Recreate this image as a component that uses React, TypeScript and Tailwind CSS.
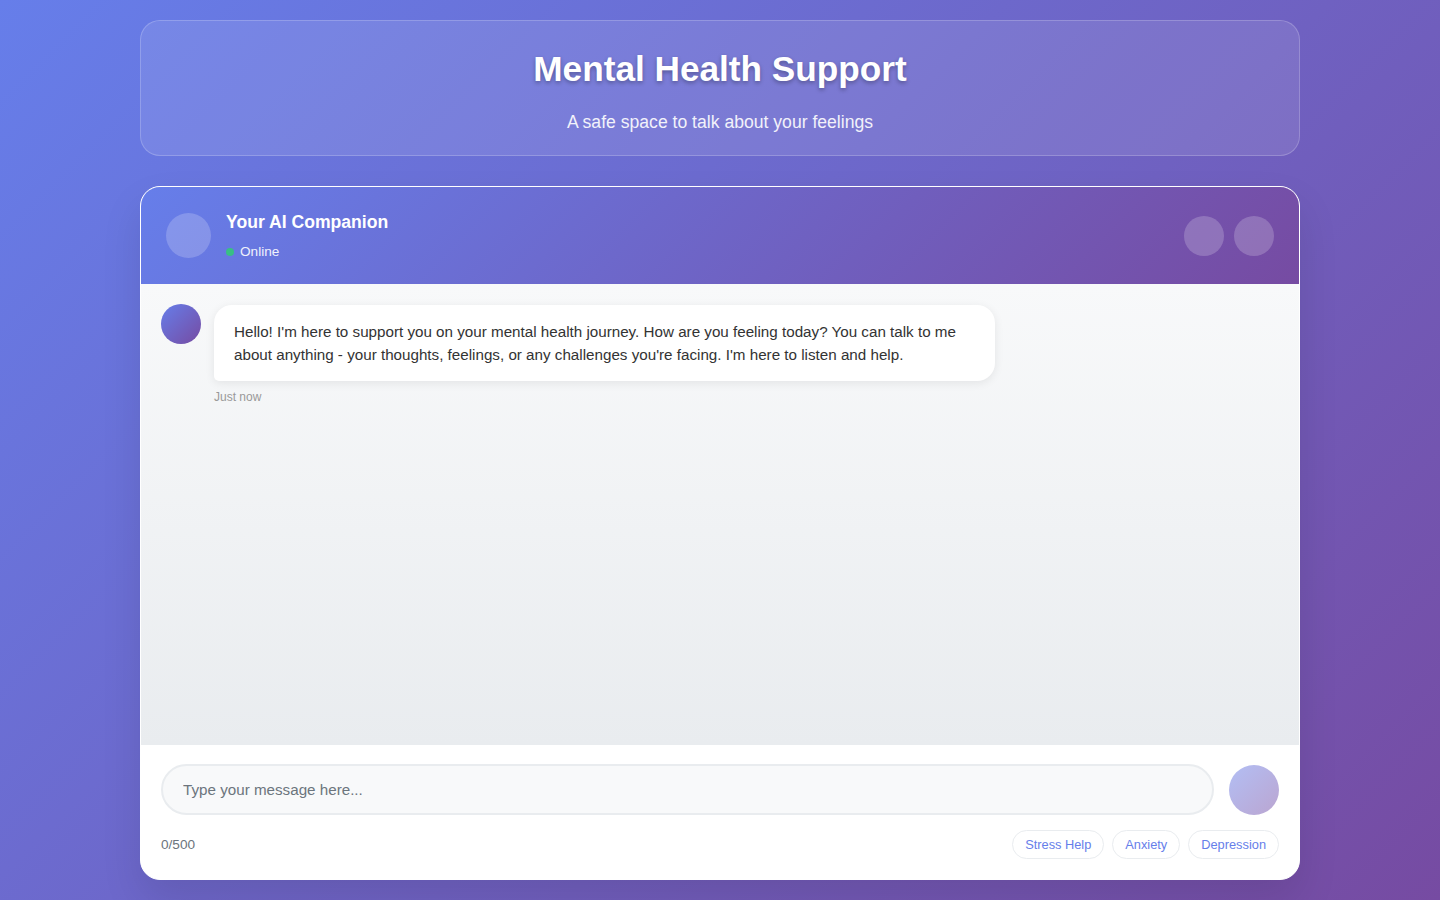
import { useState } from "react";

const QUICK_REPLIES = ["Stress Help", "Anxiety", "Depression"];

const WELCOME =
  "Hello! I'm here to support you on your mental health journey. How are you feeling today? You can talk to me about anything - your thoughts, feelings, or any challenges you're facing. I'm here to listen and help.";

const App = () => {
  const [text, setText] = useState("");

  return (
    <div className="min-h-screen bg-[linear-gradient(135deg,#667eea_0%,#764ba2_100%)] font-['Liberation_Sans',Arial,sans-serif]">
      <div className="mx-auto w-[1160px] pt-[20px]">
        {/* page header */}
        <div className="rounded-[20px] border border-white/20 bg-white/10 px-[30px] pb-[21px] pt-[28px] text-center text-white">
          <h1 className="mb-[21px] text-[35.2px] font-bold leading-[40px] [text-shadow:0_2px_4px_rgba(0,0,0,0.3)]">
            Mental Health Support
          </h1>
          <p className="text-[17.6px] leading-[24px] opacity-90">A safe space to talk about your feelings</p>
        </div>

        {/* chat card */}
        <div className="mt-[30px] flex h-[694px] flex-col overflow-hidden rounded-[20px] border border-white bg-white shadow-[0_20px_40px_rgba(0,0,0,0.1)]">
          <div className="flex h-[97px] shrink-0 items-center justify-between bg-[linear-gradient(135deg,#667eea_0%,#764ba2_100%)] px-[25px] text-white">
            <div className="flex items-center gap-[15px]">
              <div className="h-[45px] w-[45px] rounded-full bg-white/20" />
              <div className="pt-[2px]">
                <div className="text-[17.6px] font-bold leading-[21px]">Your AI Companion</div>
                <div className="mt-[9px] flex items-center gap-[6px] text-[13.6px] leading-[20px] opacity-90">
                  <span className="h-[8px] w-[8px] rounded-full bg-[#34c77b]" />
                  Online
                </div>
              </div>
            </div>
            <div className="flex gap-[10px]">
              <button className="h-[40px] w-[40px] rounded-full bg-white/20" />
              <button className="h-[40px] w-[40px] rounded-full bg-white/20" />
            </div>
          </div>

          <div className="flex-1 bg-[linear-gradient(to_bottom,#f8f9fa,#e9ecef)] p-[20px]">
            <div className="flex items-start gap-[13px]">
              <div className="h-[40px] w-[40px] shrink-0 rounded-full bg-[linear-gradient(135deg,#667eea_0%,#764ba2_100%)]" />
              <div className="mt-[1px] max-w-[781px]">
                <div className="rounded-[18px] rounded-bl-[5px] bg-white px-[20px] py-[15px] text-[15.2px] leading-[23px] text-[#333] shadow-[0_2px_10px_rgba(0,0,0,0.08)]">
                  {WELCOME}
                </div>
                <div className="mt-[7px] text-[12px] text-[#999]">Just now</div>
              </div>
            </div>
          </div>

          <div className="shrink-0 border-t border-[#e9ecef] bg-white px-[20px] pb-[20px] pt-[19px]">
            <div className="flex items-center gap-[15px]">
              <input
                value={text}
                onChange={(e) => setText(e.target.value.slice(0, 500))}
                placeholder="Type your message here..."
                className="h-[51px] flex-1 rounded-full border-2 border-[#e9ecef] bg-[#f8f9fa] px-[20px] text-[15.2px] text-[#333] outline-none placeholder:text-[#6c757d]"
              />
              <button className="h-[50px] w-[50px] shrink-0 rounded-full bg-[linear-gradient(135deg,#667eea_0%,#764ba2_100%)] opacity-50" />
            </div>
            <div className="mt-[15px] flex items-center justify-between">
              <span className="pt-[2px] text-[13.6px] text-[#6c757d]">{text.length}/500</span>
              <div className="flex gap-[8px]">
                {QUICK_REPLIES.map((q) => (
                  <button
                    key={q}
                    className="h-[29px] rounded-full border border-[#e9ecef] bg-white px-[12px] text-[12.8px] text-[#667eea]"
                  >
                    {q}
                  </button>
                ))}
              </div>
            </div>
          </div>
        </div>
      </div>
    </div>
  );
};

export default App;
